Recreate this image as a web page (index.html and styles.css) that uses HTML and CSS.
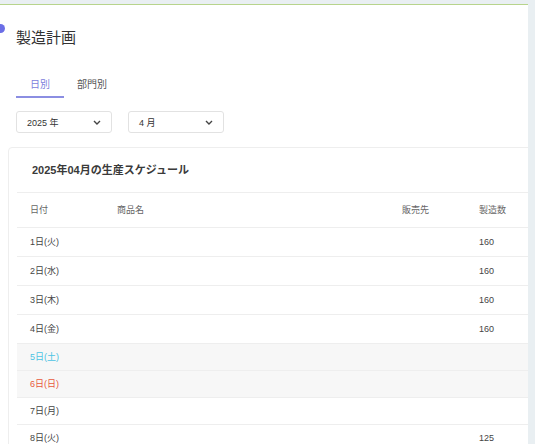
FILE: index.html
```html
<!DOCTYPE html>
<html lang="ja">
<head>
    <meta charset="UTF-8">
    <title>製造計画</title>
    <link rel="stylesheet" href="styles.css">
</head>
<body>

<div class="page">
    <span class="dot"></span>

    <div class="head">
        <h1 class="title">製造計画</h1>

        <div class="tabs">
            <div class="tab active">日別</div>
            <div class="tab">部門別</div>
        </div>

        <div class="filters">
            <div class="select">
                <span>2025 年</span>
                <svg width="8" height="5" viewBox="0 0 8 5"><polyline points="1,1 4,4 7,1" fill="none" stroke="#444" stroke-width="1.4"/></svg>
            </div>
            <div class="select">
                <span>4 月</span>
                <svg width="8" height="5" viewBox="0 0 8 5"><polyline points="1,1 4,4 7,1" fill="none" stroke="#444" stroke-width="1.4"/></svg>
            </div>
        </div>
    </div>

    <div class="card">
        <div class="card-title">2025年04月の生産スケジュール</div>
        <div class="table">
            <div class="row header">
                <div>日付</div><div>商品名</div><div>販売先</div><div>製造数</div>
            </div>
            <div class="row"><div>1日(火)</div><div></div><div></div><div>160</div></div>
            <div class="row"><div>2日(水)</div><div></div><div></div><div>160</div></div>
            <div class="row"><div>3日(木)</div><div></div><div></div><div>160</div></div>
            <div class="row"><div>4日(金)</div><div></div><div></div><div>160</div></div>
            <div class="row short holiday sat"><div>5日(土)</div><div></div><div></div><div></div></div>
            <div class="row short holiday sun"><div>6日(日)</div><div></div><div></div><div></div></div>
            <div class="row short"><div>7日(月)</div><div></div><div></div><div></div></div>
            <div class="row short"><div>8日(火)</div><div></div><div></div><div>125</div></div>
        </div>
    </div>
</div>

</body>
</html>
```

FILE: styles.css
```css
body {
    margin: 0;
    background-color: #e9eff2;
    font-family: "Liberation Sans", "Noto Sans CJK JP", sans-serif;
    color: #444;
}
.page {
    position: relative;
    margin-top: 4px;
    width: 520px;
    height: 439px;
    padding-left: 8px;
    background-color: #fff;
    border-top: 1px solid #b7d48c;
    overflow: hidden;
}
.dot {
    position: absolute;
    left: -4px;
    top: 19px;
    width: 9px;
    height: 9px;
    border-radius: 50%;
    background-color: #6b6ee6;
}
.head {
    padding-left: 8px;
}
.title {
    margin: 0;
    padding-top: 21px;
    font-size: 15px;
    font-weight: normal;
    line-height: 24px;
    color: #333;
}
.tabs {
    display: flex;
    margin-top: 28px;
}
.tab {
    padding: 0 13px 4px;
    font-size: 10px;
    line-height: 14px;
    color: #555;
    border-bottom: 2px solid transparent;
}
.tab.active {
    padding: 0 14px 4px;
    color: #7d80dc;
    border-bottom-color: #8b8ee2;
}
.filters {
    display: flex;
    gap: 16px;
    margin-top: 13px;
}
.select {
    display: flex;
    align-items: center;
    justify-content: space-between;
    box-sizing: border-box;
    width: 96px;
    height: 22px;
    padding: 0 10px;
    border: 1px solid #e2e2e2;
    border-radius: 3px;
    font-size: 9px;
    color: #333;
}
.card {
    margin-top: 14px;
    width: 540px;
    border: 1px solid #eee;
    border-radius: 4px;
}
.card-title {
    height: 44px;
    padding-left: 23px;
    font-size: 11px;
    font-weight: bold;
    line-height: 44px;
    color: #3a3a3a;
}
.table {
    margin-left: 8px;
}
.row {
    display: grid;
    grid-template-columns: 87px 285px 77px 1fr;
    height: 28px;
    padding-left: 13px;
    border-top: 1px solid #eee;
    font-size: 9px;
    line-height: 28px;
    color: #444;
}
.row.header {
    height: 34px;
    line-height: 34px;
    color: #666;
}
.row.short {
    height: 26px;
    line-height: 26px;
}
.row.holiday {
    background-color: #f7f7f7;
}
.row.sat {
    color: #4cc3e3;
}
.row.sun {
    color: #e8593c;
}
```
